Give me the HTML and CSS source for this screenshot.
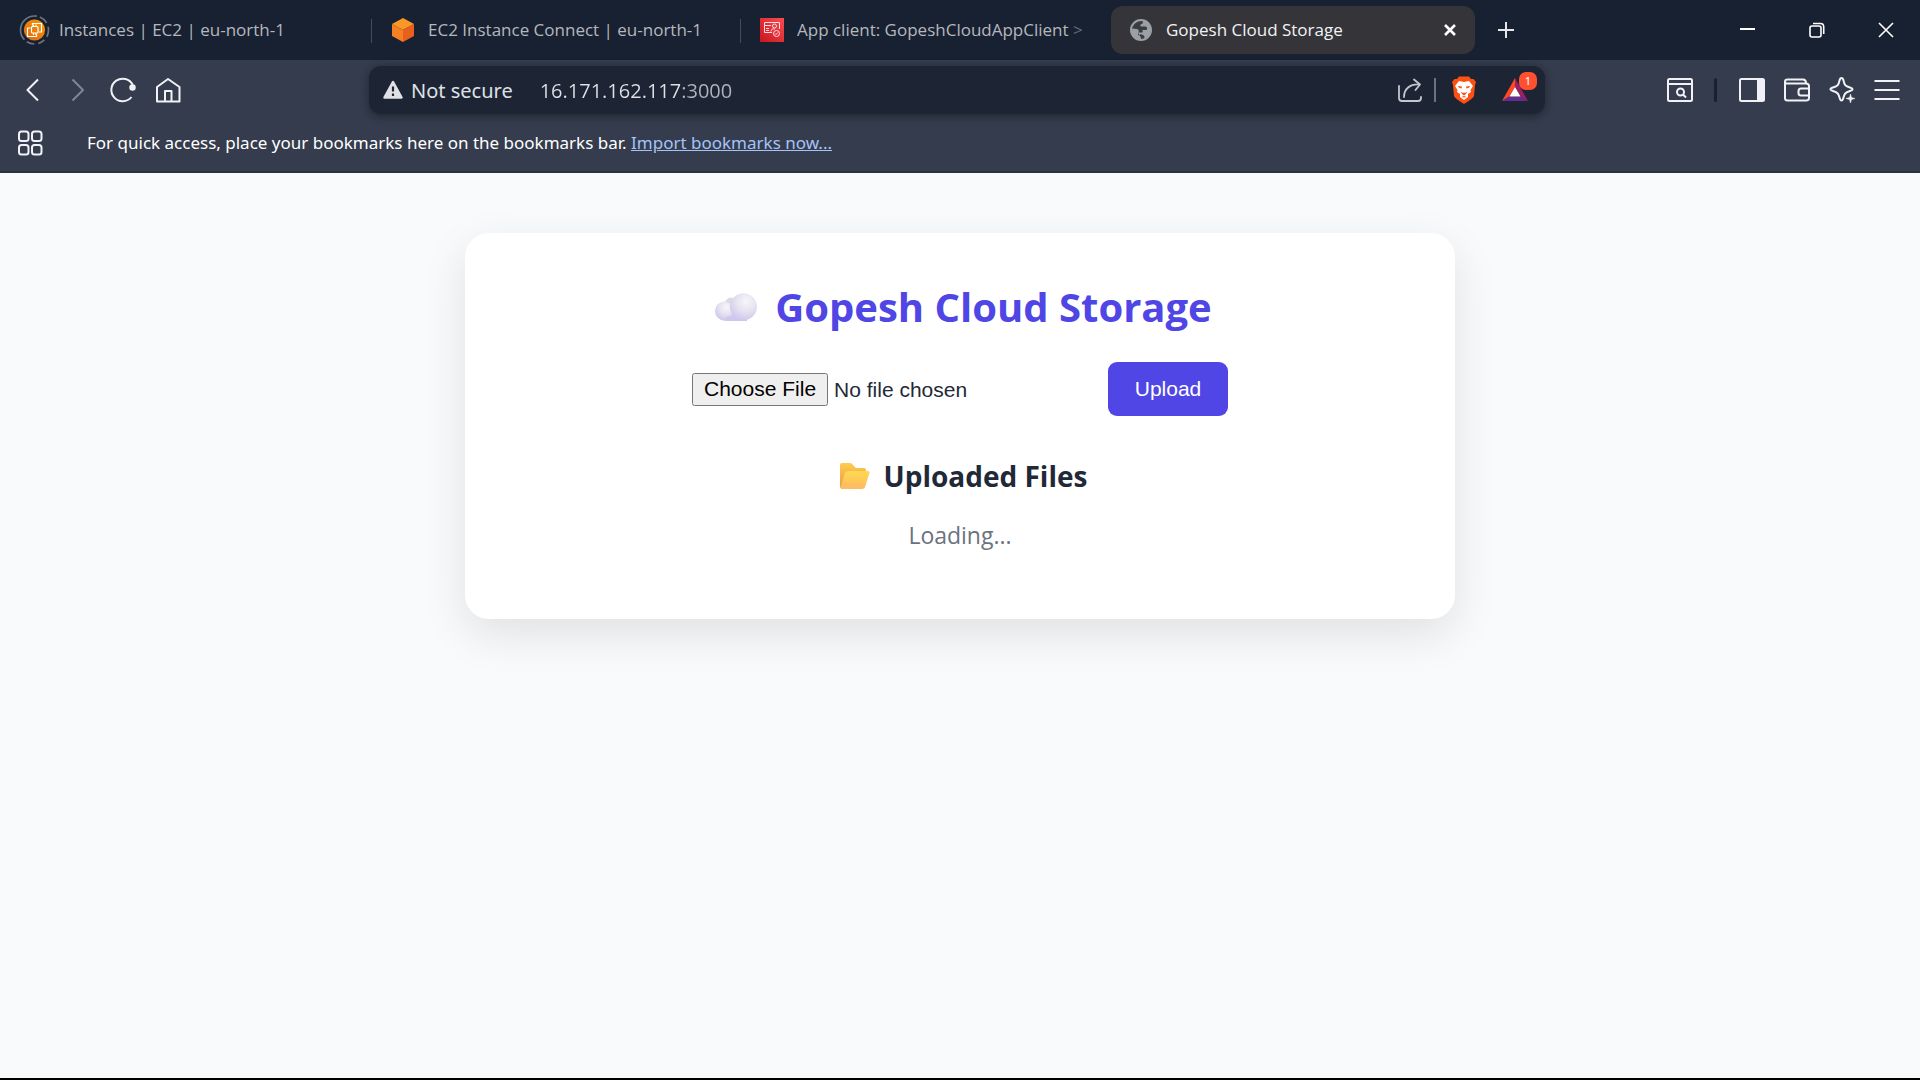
FILE: index.html
```html
<!DOCTYPE html>
<html lang="en">
<head>
<meta charset="utf-8">
<meta name="viewport" content="width=device-width, initial-scale=1">
<title>Gopesh Cloud Storage</title>
<link rel="stylesheet" href="styles.css">
</head>
<body>
<header class="browser">
  <div class="tab-strip">
    <nav class="tabs" aria-label="Open tabs">
      <a class="tab divided" href="#">
        <svg class="favicon" viewBox="0 0 24 24" fill="none">
          <defs><linearGradient id="ec2" x1="0" y1="1" x2="1" y2="0"><stop offset="0" stop-color="#d86613"/><stop offset="1" stop-color="#ff9900"/></linearGradient></defs>
          <circle cx="12.500" cy="12" r="14" stroke="#6b7280" stroke-width="1.700" stroke-dasharray="7 4 7 4 8 3 35 3 9 4 4"/>
          <circle cx="12.500" cy="12" r="10.600" fill="url(#ec2)"/>
          <g stroke="#fff" stroke-width="1.200"><rect x="9.500" y="8.500" width="6.500" height="6.500" rx="1"/><path d="M10.500 7.500V5.500H19.500V14H17M8.500 10H5.500V18.500H14.500V16M11.500 8V6.500M14 8V6.500M11.500 15V17M14 15V17"/></g>
        </svg>
        <span class="tab-title">Instances | EC2 | eu-north-1</span>
      </a>
      <a class="tab divided" href="#">
        <svg class="favicon" viewBox="0 0 24 24"><path fill="#fb9726" d="M12 0 23 6 12 12 1 6z"/><path fill="#f68024" d="M1 6 12 12V24L1 18z"/><path fill="#e95f1c" d="M23 6 12 12V24L23 18z"/></svg>
        <span class="tab-title">EC2 Instance Connect | eu-north-1</span>
      </a>
      <a class="tab" href="#">
        <svg class="favicon" viewBox="0 0 24 24" fill="none">
          <defs><linearGradient id="cog" x1="0" y1="1" x2="1" y2="0"><stop offset="0" stop-color="#c8151f"/><stop offset="1" stop-color="#fb4c50"/></linearGradient></defs>
          <path fill="url(#cog)" d="M0 0h24v24H0z"/>
          <g stroke="#ffdcdc" stroke-width="1"><path d="M12 14.500H4.500V4.500H19.500V11M4.500 7.500H11M6 10.500H9M6 12.500H9"/><circle cx="14.500" cy="8" r="2"/><path d="M11 13.500C11 11 13 10.500 15 11"/><circle cx="16.500" cy="15.500" r="3"/><path d="M15 15.500 16 16.500 18 14.500"/></g>
        </svg>
        <span class="tab-title">App client: GopeshCloudAppClient <span class="fade">&gt;</span></span>
      </a>
      <div class="tab active">
        <svg class="favicon" viewBox="0 0 24 24"><circle cx="12" cy="12" r="10" fill="#3b3c3f" stroke="#9aa0a6" stroke-width="2"/><path fill="#9aa0a6" d="M14 2C20 3 23 8 22 13C21 17 18 20 15 21.500C16 19 15.500 18 14 17C12.500 16 9 17 9 14.500H13C14 14.500 14 12.500 13 12H17C19 11.500 18 8.500 16.500 8.500H12C11 8.500 11 6 12.500 6C14 6 14 4.500 14 2zM2 10.500 8 11C10 11.500 10.500 14 9 14.500V17C11 17.500 12 18 12 22C6 22 1.500 17 2 10.500z"/></svg>
        <span class="tab-title">Gopesh Cloud Storage</span>
        <button class="tab-close" aria-label="Close tab"><svg width="14" height="14" viewBox="0 0 14 14"><path d="M2 2 12 12M12 2 2 12" stroke="#fff" stroke-width="2.600"/></svg></button>
      </div>
    </nav>
    <button class="new-tab" aria-label="New tab"><svg width="18" height="18" viewBox="0 0 18 18"><path d="M9 1V17M1 9H17" stroke="#e5e7ea" stroke-width="2"/></svg></button>
    <div class="window-controls">
      <button class="window-button" aria-label="Minimize"><svg width="16" height="16" viewBox="0 0 16 16"><path d="M0 7H15" stroke="#fff" stroke-width="2"/></svg></button>
      <button class="window-button" aria-label="Restore"><svg width="16" height="16" viewBox="0 0 16 16" fill="none" stroke="#fff" stroke-width="1.600"><rect x="1" y="4" width="11" height="11" rx="2"/><path d="M4 1.500H11.500Q14.700 1.500 14.700 5V12"/></svg></button>
      <button class="window-button" aria-label="Close window"><svg width="16" height="16" viewBox="0 0 16 16"><path d="M1 1 15 15M15 1 1 15" stroke="#fff" stroke-width="1.600"/></svg></button>
    </div>
  </div>

  <div class="toolbar">
    <div class="nav-buttons">
      <button class="tool" aria-label="Back"><svg class="glyph" viewBox="0 0 28 28"><path d="M19 3.500 8.500 14 19 24.500"/></svg></button>
      <button class="tool dim" aria-label="Forward"><svg class="glyph" viewBox="0 0 28 28"><path d="M8.500 3.500 19 14 8.500 24.500"/></svg></button>
      <button class="tool" aria-label="Reload"><svg class="glyph" viewBox="0 0 28 28"><path d="M23.800 9A11.300 11.300 0 1 0 22.500 21"/><circle cx="23.500" cy="11.500" r="2.500" fill="#f1f2f5" stroke-width="1.500"/></svg></button>
      <button class="tool" aria-label="Home"><svg class="glyph" viewBox="0 0 28 28"><path d="M3 25.500V11L14 3 25.500 11V25.500zM11 25V15H17.500V25"/></svg></button>
    </div>
    <form class="address">
      <svg class="warning" width="20" height="20" viewBox="0 0 20 20"><path d="M10 2 18.500 17.500H1.500z" fill="#dfe1e6" stroke="#dfe1e6" stroke-width="2.500" stroke-linejoin="round"/><path d="M10 6.500V11.500M10 13.500V16" stroke="#1d2535" stroke-width="2.200"/></svg>
      <label class="security" for="url">Not secure</label>
      <input class="url" id="url" type="text" value="16.171.162.117:3000">
      <button class="address-button" type="button" aria-label="Share"><svg width="26" height="26" viewBox="0 0 26 26" fill="none" stroke="#c3c7ce" stroke-width="1.800" stroke-linecap="round" stroke-linejoin="round"><path d="M2 9V21Q2 24 5 24H21Q24 24 24 21V20M7 20C7 12 13 7 22 7.500M17 2.500 23 7.500 18.500 13"/></svg></button>
      <span class="address-divider"></span>
      <button class="address-button shield" type="button" aria-label="Brave Shields"><svg width="24" height="28" viewBox="0 0 24 28"><path fill="#ff4f12" d="M7 .5H17L19 3H21.500L24 6 23 9 22 20Q21 22.500 12 28 3 22.500 2 20L1 9 0 6 2.500 3H5z"/><path fill="#fff" d="M7 5 12 6 17 5 21 10 18.500 14 19 16 16 18 16 21 12 24 8 21 8 18 5 16 5.500 14 3 10z"/><path fill="#ff4f12" d="M5.500 10 10 10.500 9.500 12.500 7.500 12zM18.500 10 14 10.500 14.500 12.500 16.500 12zM8.500 15.500 11 17 12 16.500 13 17 15.500 15.500 13.500 18.500 12 19.500 10.500 18.500zM9.500 21 12 20 14.500 21 12 21.500z"/></svg></button>
      <button class="address-button rewards" type="button" aria-label="Brave Rewards"><svg width="28" height="24" viewBox="0 0 28 24"><path fill="#ff4724" d="M14 0V9L8.500 18.500 1 23z"/><path fill="#9e1f63" d="M14 0 27 23 19.500 18.500 14 9z"/><path fill="#662d91" d="M1 23 8 18.500H20L27 23z"/><path fill="#fff" d="M14 9 19.500 18.500H8.500z"/></svg><span class="badge">1</span></button>
    </form>
    <div class="side-buttons">
      <button class="tool" aria-label="Search tabs"><svg class="glyph" viewBox="0 0 28 28"><rect x="2" y="3" width="24" height="22" rx="1.500"/><path d="M2 8H26M17 18.500 20 21.500"/><circle cx="14.500" cy="16" r="3.500"/></svg></button>
      <span class="tool-divider"></span>
      <button class="tool" aria-label="Side panel"><svg class="glyph" viewBox="0 0 28 28"><rect x="2" y="3" width="24" height="22" rx="1.500"/><path d="M20 4H25V24H20z" fill="#f1f2f5"/></svg></button>
      <button class="tool" aria-label="Wallet"><svg class="glyph" viewBox="0 0 28 28"><path d="M2 6V22Q2 24.500 4.500 24.500H23Q26 24.500 26 22V10Q26 7.500 23 7.500H4Q2 7.500 2 5.500 2 3.500 4.500 3.500H20Q23 3.500 23 7M26 12.500H18Q15.500 12.500 15.500 15V17Q15.500 19.500 18 19.500H26"/></svg></button>
      <button class="tool" aria-label="Leo AI"><svg class="glyph" viewBox="0 0 28 28"><path d="M13.500 2C14.500 2 15 2.500 15.500 4.500 16.500 9 17 10 22 11.500 25.500 12.500 25.500 14 22 15 17 16.500 16.500 18 15.500 21.500 14.500 25.500 12.500 25.500 11.500 21.500 10.500 18 10 16.500 5 15 1.500 14 1.500 12.500 5 11.500 10 10 10.500 9 11.500 4.500 12 2.500 12.500 2 13.500 2z"/><path d="M22.500 18 23.500 21.500 27 22.500 23.500 23.500 22.500 27 21.500 23.500 18 22.500 21.500 21.500z" fill="#f1f2f5" stroke-width=".5"/></svg></button>
      <button class="tool" aria-label="Menu"><svg class="glyph" viewBox="0 0 28 28"><path d="M1.500 5H26.500M1.500 14H26.500M1.500 23H26.500"/></svg></button>
    </div>
  </div>

  <div class="bookmarks">
    <button class="tool" aria-label="All bookmarks"><svg class="glyph" viewBox="0 0 28 28"><rect x="3" y="2.500" width="9.500" height="9.500" rx="2.500"/><rect x="16" y="2.500" width="9.500" height="9.500" rx="2.500"/><rect x="3" y="16" width="9.500" height="9.500" rx="2.500"/><rect x="16" y="16" width="9.500" height="9.500" rx="2.500"/></svg></button>
    <p class="bookmark-hint">For quick access, place your bookmarks here on the bookmarks bar. <a class="import" href="#">Import bookmarks now...</a></p>
  </div>
</header>

<main class="page">
  <section class="card">
    <h1 class="title">
      <svg class="cloud" viewBox="0 0 42 28"><defs>
        <radialGradient id="puff" cx=".6" cy=".3" r=".75"><stop offset="0" stop-color="#f7f6f9"/><stop offset=".5" stop-color="#e6e2f0"/><stop offset="1" stop-color="#cdc4ec"/></radialGradient>
        <linearGradient id="base" x1="0" y1="0" x2="0" y2="1"><stop offset="0" stop-color="#dedce0"/><stop offset="1" stop-color="#cfc5ee"/></linearGradient></defs>
        <path fill="url(#base)" d="M10 28Q7 20 10 9 13 3 18 5L32 12V28z"/><circle cx="9.500" cy="18" r="9.500" fill="url(#puff)"/><path fill="#d0c7ee" d="M8 27.500H30L24 20 12 24z"/><circle cx="28.500" cy="13.800" r="13.500" fill="url(#puff)"/></svg>
      <span>Gopesh Cloud Storage</span>
    </h1>
    <form class="upload">
      <input class="file" type="file" aria-label="File to upload">
      <button class="submit" type="button">Upload</button>
    </form>
    <h2 class="subtitle">
      <svg class="folder" viewBox="0 0 30 26"><defs><linearGradient id="front" x1="0" y1="0" x2="0" y2="1"><stop offset="0" stop-color="#ffd950"/><stop offset="1" stop-color="#ffb964"/></linearGradient><linearGradient id="back" x1="0" y1="0" x2="0" y2="1"><stop offset="0" stop-color="#ffcb4f"/><stop offset="1" stop-color="#e79a45"/></linearGradient></defs>
        <path fill="url(#back)" d="M0 2Q0 0 2 0H10Q12 0 13 2L16 5H24Q26 5 26 7V20L3 26Q0 26 0 23z"/><path fill="url(#front)" d="M9 8H28Q30 8 29.500 10L25 24Q24.500 26 22 26H3Q0 26 1 23L5 10Q6 8 9 8z"/></svg>
      <span>Uploaded Files</span>
    </h2>
    <p class="status">Loading...</p>
  </section>
</main>
</body>
</html>
```
FILE: styles.css
```css
* { box-sizing: border-box; }

body {
  margin: 0;
  min-height: 100vh;
  display: flex;
  flex-direction: column;
  font-family: "Noto Sans", "Open Sans", sans-serif;
  color: #1f2937;
  background: #f9fafb;
  border-bottom: 2px solid #000;
}

button { padding: 0; border: 0; background: none; font: inherit; color: inherit; }

.browser { color: #fff; background: #343c4d; border-bottom: 2px solid #2b3240; font-size: 17px; }

/* Tab strip */
.tab-strip { display: flex; align-items: center; height: 60px; padding-left: 4px; background: #182131; }
.tabs { display: flex; gap: 5px; font-family: "Open Sans", "Noto Sans", sans-serif; }
.tab {
  position: relative;
  display: flex;
  align-items: center;
  gap: 13px;
  width: 364px;
  height: 48px;
  padding: 0 18px;
  border-radius: 12px;
  color: #b4b8be;
  text-decoration: none;
  white-space: nowrap;
}
.divided::after { content: ""; position: absolute; right: -4px; top: 13px; width: 1px; height: 24px; background: #454b56; }
.active { color: #f1f2f3; background: #353539; }
.favicon { width: 24px; height: 24px; flex: none; overflow: visible; }
.tab-title { flex: 1; padding-bottom: 2px; }
.fade { color: #656c77; }
.tab-close { display: flex; }
.new-tab { display: flex; justify-content: center; width: 61px; }
.window-controls { display: flex; margin-left: auto; }
.window-button { display: flex; align-items: center; justify-content: center; width: 69px; height: 60px; }

/* Toolbar */
.toolbar { display: flex; align-items: center; height: 60px; }
.nav-buttons { display: flex; width: 369px; padding-left: 10px; }
.side-buttons { display: flex; align-items: center; justify-content: flex-end; width: 375px; padding-right: 11px; }
.tool { display: flex; align-items: center; justify-content: center; width: 45px; height: 45px; }
.glyph { width: 28px; height: 28px; fill: none; stroke: #f1f2f5; stroke-width: 2; stroke-linejoin: round; }
.dim { opacity: .4; }
.tool-divider { width: 3px; height: 24px; margin: 0 12px; border-radius: 2px; background: #182131; }
.address {
  flex: 1;
  display: flex;
  align-items: center;
  height: 48px;
  padding: 0 14px;
  border-radius: 12px;
  color: #dfe1e6;
  background: #1d2535;
  box-shadow: 0 2px 8px #0006;
  font-size: 20px;
}
.security { margin: 0 27px 0 8px; }
.url {
  flex: 1;
  min-width: 0;
  padding: 0;
  border: 0;
  outline: 0;
  font: inherit;
  font-family: "Open Sans", "Noto Sans", sans-serif;
  color: transparent;
  background: linear-gradient(90deg, #dfe1e6 140px, #b0b5be 140px) text;
}
.address-button { position: relative; display: flex; }
.address-divider { width: 2px; height: 24px; margin: 0 16px 0 11px; background: #6b7280; }
.rewards { margin-left: 25px; margin-right: 2px; }
.badge {
  position: absolute;
  top: -6px;
  right: -8px;
  width: 18px;
  height: 18px;
  border-radius: 7px;
  background: #ff5130;
  color: #fff;
  font-size: 11px;
  line-height: 18px;
}

/* Bookmarks bar */
.bookmarks { display: flex; align-items: center; height: 51px; padding: 0 7px 5px; }
.bookmark-hint { margin: 0 0 0 35px; padding-bottom: 1px; }
.import { color: #a5c3f8; }

/* Page */
.page { flex: 1; padding: 60px 24px; font-family: "Open Sans", "Noto Sans", sans-serif; }
.card {
  max-width: 990px;
  min-height: 386px;
  margin: 0 auto;
  padding: 44px 60px 60px;
  border-radius: 24px;
  background: #fff;
  box-shadow: 0 15px 45px #0000001a;
  text-align: center;
}
.title, .subtitle { display: flex; align-items: center; justify-content: center; margin: 0; padding-left: 7px; }
.title { gap: 18px; font-size: 40px; line-height: 60px; color: #4f46e5; }
.cloud { width: 42px; height: 28px; }
.upload { display: flex; align-items: center; justify-content: center; gap: 24px; margin-top: 25px; }
.file { width: 392px; font: 21px "Liberation Sans", Arial, sans-serif; }
.file::file-selector-button { height: 33px; padding: 0 10px; margin-right: 6px; }
.submit {
  width: 120px;
  height: 54px;
  border-radius: 9px;
  background: #4f46e5;
  color: #fff;
  font: 21px "Liberation Sans", Arial, sans-serif;
}
.subtitle { gap: 14px; margin-top: 40px; font-size: 28px; line-height: 40px; }
.folder { width: 30px; height: 26px; }
.status { margin: 21px 0 0; color: #6b7280; font-size: 23px; line-height: 36px; }
```
